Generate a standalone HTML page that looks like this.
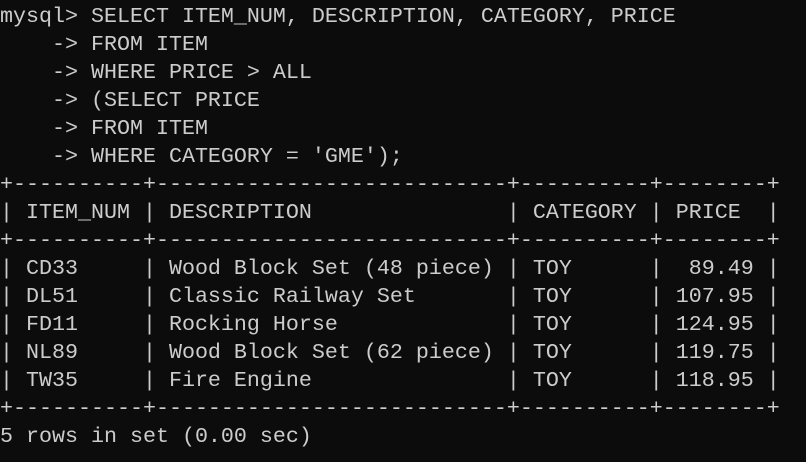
<!DOCTYPE html>
<html><head><meta charset="utf-8"><style>
html,body{margin:0;padding:0;background:#0c0c0c;width:806px;height:462px;overflow:hidden}
pre{margin:0;position:absolute;left:0;top:3px;font-family:"Liberation Mono",monospace;font-size:21.67px;line-height:28px;color:#cccccc;white-space:pre}
</style></head><body><pre>mysql&gt; SELECT ITEM_NUM, DESCRIPTION, CATEGORY, PRICE
    -&gt; FROM ITEM
    -&gt; WHERE PRICE &gt; ALL
    -&gt; (SELECT PRICE
    -&gt; FROM ITEM
    -&gt; WHERE CATEGORY = 'GME');
+----------+---------------------------+----------+--------+
| ITEM_NUM | DESCRIPTION               | CATEGORY | PRICE  |
+----------+---------------------------+----------+--------+
| CD33     | Wood Block Set (48 piece) | TOY      |  89.49 |
| DL51     | Classic Railway Set       | TOY      | 107.95 |
| FD11     | Rocking Horse             | TOY      | 124.95 |
| NL89     | Wood Block Set (62 piece) | TOY      | 119.75 |
| TW35     | Fire Engine               | TOY      | 118.95 |
+----------+---------------------------+----------+--------+
5 rows in set (0.00 sec)</pre></body></html>
